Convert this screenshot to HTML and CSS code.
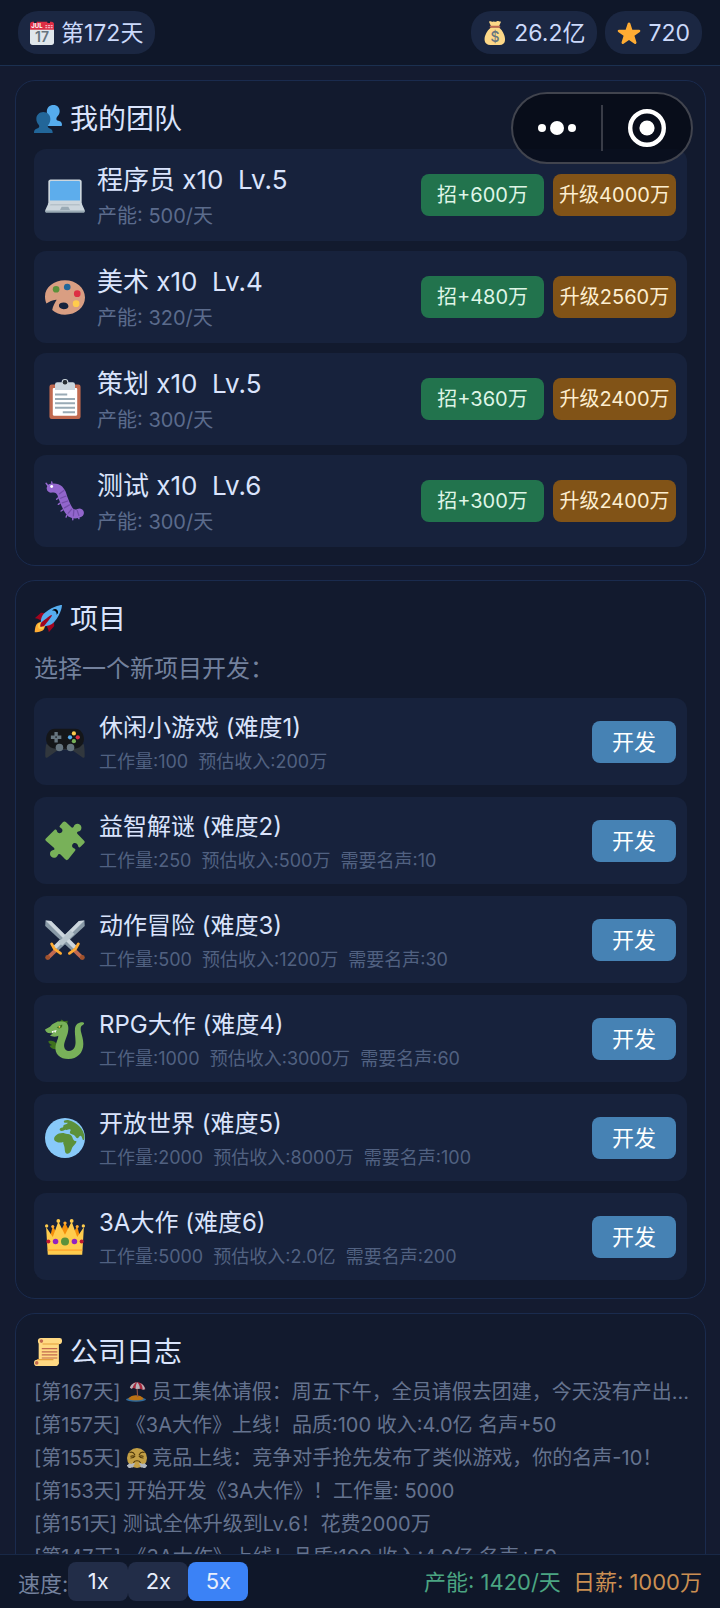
FILE: index.html
```
<!DOCTYPE html>
<html lang="zh-CN">
<head>
<meta charset="utf-8">
<meta name="viewport" content="width=device-width, initial-scale=1">
<title>我的团队</title>
<link rel="stylesheet" href="styles.css">
</head>
<body>
<div class="app">
  <header class="topbar">
    <div class="pill">
      <svg class="pill-icon" viewBox="0 0 36 36" aria-hidden="true"><path fill="#E0E7EC" d="M36 32a4 4 0 0 1-4 4H4a4 4 0 0 1-4-4V9h36z"/><path fill="#DD2E44" d="M4 1h28a4 4 0 0 1 4 4v8H0V5a4 4 0 0 1 4-4z"/><path fill="#14203a" d="M6 0h4v3H6zM26 0h4v3h-4z"/><path fill="#F4ABBA" d="M23 6h3v2h-3zM27 6h3v2h-3zM31 6h3v2h-3zM23 9h3v2h-3zM27 9h3v2h-3zM31 9h3v2h-3z"/><text x="2" y="11" class="cal-month">JUL</text><text x="18" y="32" text-anchor="middle" class="cal-day">17</text></svg>
      <span>第172天</span>
    </div>
    <div class="pill-group">
      <div class="pill">
        <svg class="pill-icon" viewBox="0 0 36 36" aria-hidden="true"><path fill="#FDD888" d="M31.9 21.5C30.500 16 26 11.500 23.500 9.500H12.500C10 11.500 5 16 3.500 21.500 1.500 26 1 36 11 36h14c10 0 8.500-10 6.900-14.500z"/><path fill="#FDD888" d="M12 8 9 1c3-2 4 1 6 0s4 1 6-.5 3 .5 6 .5l-3 7z"/><path fill="#BF6952" d="M11.500 7h13a1.500 1.500 0 0 1 0 3h-13a1.500 1.500 0 0 1 0-3z"/><text x="18" y="31" text-anchor="middle" class="bag-sign">$</text></svg>
        <span>26.2亿</span>
      </div>
      <div class="pill">
        <svg class="pill-icon" viewBox="0 0 36 36" aria-hidden="true"><path fill="#FFAC33" d="M27.287 34.627c-.404 0-.806-.124-1.152-.371L18 28.422l-8.135 5.834c-.343.247-.746.371-1.148.371-.403 0-.806-.123-1.151-.374-.688-.499-.977-1.387-.715-2.196l3.034-9.792-8.062-5.681c-.685-.506-.967-1.396-.704-2.205.264-.809 1.016-1.357 1.866-1.363l9.947-.014L16.150 3.445C16.421 2.640 17.174 2.100 18.023 2.100c.85 0 1.604.54 1.873 1.345l3.135 9.557 10.019.014c.849.006 1.602.554 1.865 1.363.263.809-.019 1.699-.704 2.205l-8.062 5.681 3.034 9.792c.262.809-.027 1.697-.715 2.196-.345.251-.748.374-1.181.374z"/></svg>
        <span>720</span>
      </div>
    </div>
  </header>

  <div class="capsule">
    <button class="capsule-btn" type="button" aria-label="更多"><svg class="dots" viewBox="0 0 40 16"><circle cx="5" cy="8" r="4"/><circle cx="20" cy="8" r="7"/><circle cx="35" cy="8" r="4"/></svg></button>
    <button class="capsule-btn" type="button" aria-label="关闭"><svg class="target" viewBox="0 0 38 38"><circle cx="19" cy="19" r="16.800" fill="none" stroke="#fff" stroke-width="4.400"/><circle cx="19" cy="19" r="7.600"/></svg></button>
  </div>

  <main class="content">
    <section class="card">
      <h2 class="card-title">
        <svg class="title-icon" viewBox="0 0 36 36" aria-hidden="true"><path fill="#55ACEE" d="M25 0c-5 0-8.500 3.500-8.500 8.500 0 3 .8 5.500 2.500 7.500 1 1.500 1 3.500-.5 4.500L14 23v4h21c1 0 1-1 1-1.500 0-4-3-5-6-5.500-1.500-.5-1.500-3-.5-4.500 2-2 3.500-4.500 3.500-7.500C33 3.500 30 0 25 0z"/><path fill="#226699" d="M12 9c-5 0-9 3.500-9 9 0 3 1.500 6 3 7.500 1.200 1.500 1 3.500-.5 4C2 30.500 0 32 0 35c0 1 0 1 1 1h22c1 0 1 0 1-1 0-3-2-4.500-5-5.500-1.500-.5-1.700-2.500-.5-4 1.500-1.500 2.500-4.500 2.500-7.500 0-5.500-4-9-9-9z"/></svg>
        我的团队
      </h2>
      <ul class="team-list">
        <li class="row">
          <svg class="row-icon" viewBox="0 0 36 36" aria-hidden="true"><path fill="#CCD6DD" d="M33 29.100c0 1-1 1.900-2 1.900H5c-1 0-2-.8-2-1.900V6c0-1.100.9-2 2-2h26c1.100 0 2 .9 2 2z"/><path fill="#9AAAB4" d="M36 32.400c0 .9-.7 1.600-1.600 1.600H1.600C.7 34 0 33.300 0 32.400s.7-1 1.600-1h32.800c.9 0 1.600.1 1.600 1z"/><path fill="#5DADEC" d="M5.500 5.500h25a1 1 0 0 1 1 1V23h-27V6.500a1 1 0 0 1 1-1z"/><path fill="#CCD6DD" d="m.1 32 3-6.500c.2-.4.500-.5 1-.5h27.800c.5 0 .8.100 1 .5l3 6.500z"/><path fill="#99AAB5" d="M13.500 31.500 15 28.500h6l1.500 3z"/><path fill="#B5C1C9" d="M5 26h26l.7 1.500H4.300z"/></svg>
          <div class="info"><div class="name">程序员 x10&nbsp; Lv.5</div><div class="meta">产能: 500/天</div></div>
          <div class="actions"><button class="btn btn-hire" type="button">招+600万</button><button class="btn btn-up" type="button">升级4000万</button></div>
        </li>
        <li class="row">
          <svg class="row-icon" viewBox="0 0 36 36" aria-hidden="true"><path fill="#D99E82" fill-rule="evenodd" d="M18 3C8 3 0 9.400 0 17.500 0 20 .5 22 1.300 23.800c2.500-1.300 6-3.600 9.200-3.300-1.500 2.500-3.500 6-4 9.200C9.500 32.500 13.500 34 18 34c10 0 18-6.900 18-15.500S28 3 18 3zm-1.200 26c-2.500 0-4.300-1.500-4.300-3.300s1.800-2.700 4.300-2.700 4.300 1.500 4.300 3.300S19.300 29 16.800 29z"/><circle cx="10" cy="11" r="3" fill="#5C913B"/><circle cx="20" cy="9" r="3" fill="#226699"/><circle cx="29" cy="15" r="3" fill="#DD2E44"/><circle cx="28" cy="24" r="3" fill="#FFCC4D"/></svg>
          <div class="info"><div class="name">美术 x10&nbsp; Lv.4</div><div class="meta">产能: 320/天</div></div>
          <div class="actions"><button class="btn btn-hire" type="button">招+480万</button><button class="btn btn-up" type="button">升级2560万</button></div>
        </li>
        <li class="row">
          <svg class="row-icon" viewBox="0 0 36 36" aria-hidden="true"><path fill="#C1694F" d="M32 34a2 2 0 0 1-2 2H6a2 2 0 0 1-2-2V7a2 2 0 0 1 2-2h24a2 2 0 0 1 2 2z"/><path fill="#FFF" d="M29 32a1 1 0 0 1-1 1H8a1 1 0 0 1-1-1V9a1 1 0 0 1 1-1h20a1 1 0 0 1 1 1z"/><path fill="#CCD6DD" fill-rule="evenodd" d="M25 3h-4a3 3 0 0 0-6 0h-4a2 2 0 0 0-2 2v5h18V5a2 2 0 0 0-2-2zm-7 1.800a1.800 1.800 0 1 1 0-3.600 1.800 1.800 0 0 1 0 3.600z"/><path fill="#292F33" d="M18 1a2 2 0 1 1 0 4 2 2 0 0 1 0-4z"/><path fill="#99AAB5" d="M9 13h11v1.800H9zM9 17h18v1.800H9zM9 21h18v1.800H9zM9 25h18v1.800H9zM16 29h11v1.800H16z"/></svg>
          <div class="info"><div class="name">策划 x10&nbsp; Lv.5</div><div class="meta">产能: 300/天</div></div>
          <div class="actions"><button class="btn btn-hire" type="button">招+360万</button><button class="btn btn-up" type="button">升级2400万</button></div>
        </li>
        <li class="row">
          <svg class="row-icon" viewBox="0 0 36 36" aria-hidden="true"><g fill="none" stroke-linecap="round" stroke-linejoin="round"><path stroke="#9266CC" stroke-width="1.300" d="M2.500 4 1 2M6.500 3.500 6 .8M12 15l-1.500 1.500M13.500 20l-1.500 1M16 26l-1.500 1M19.500 31l-.5 1.500M25 33v1.800M30 32l.5 1.800"/><path stroke="#9266CC" stroke-width="8" d="M5.500 6.500c6-1 9 2 10.500 8C18 20 20 26 23.500 28.700c2.500 1.500 5 1.300 7.500 0"/><path stroke="#744EAA" stroke-width="1.100" d="m13 11.500 4-3M14 15.500l5-2M15.500 19.700l5-1.700M17.500 24.200l4.500-2.700M21 29l3-3.700M25.500 31.500l.5-5.500M30.500 31l-1.500-4.500"/></g><circle cx="6" cy="5" r="1.300" fill="#fff"/></svg>
          <div class="info"><div class="name">测试 x10&nbsp; Lv.6</div><div class="meta">产能: 300/天</div></div>
          <div class="actions"><button class="btn btn-hire" type="button">招+300万</button><button class="btn btn-up" type="button">升级2400万</button></div>
        </li>
      </ul>
    </section>

    <section class="card">
      <h2 class="card-title">
        <svg class="title-icon" viewBox="0 0 36 36" aria-hidden="true"><path fill="#A0041E" d="M1 17l8-7 16 1 1 16-7 8s.001-5.999-6-12-12-6-12-6z"/><path fill="#FFAC33" d="M.973 35s-.036-7.979 2.985-11S15 21.187 15 21.187 14.999 29 11.999 32c-3 3-11.026 3-11.026 3z"/><circle fill="#FFCC4D" cx="9" cy="27" r="4"/><path fill="#55ACEE" d="M35.999 0s-10 0-22 10c-6 5-6 14-4 16s10 2 16-4c10-12 10-22 10-22z"/><path d="M26.999 5c-1.623 0-3.013.971-3.641 2.360.502-.227 1.055-.36 1.641-.36 2.209 0 4 1.791 4 4 0 .586-.133 1.139-.359 1.640 1.389-.627 2.359-2.017 2.359-3.640 0-2.209-1.791-4-4-4z"/><path fill="#A0041E" d="M8 28s0-4 1-5 13.001-10.999 14-10-9.001 13-10.001 14S8 28 8 28z"/></svg>
        项目
      </h2>
      <p class="hint">选择一个新项目开发：</p>
      <ul class="project-list">
        <li class="row project">
          <svg class="row-icon" viewBox="0 0 36 36" aria-hidden="true"><path fill="#31373D" d="M1 20C.3 24 .2 29 .3 31c.2 1.300 1 1.500 2.200.700L12 25h12l9.500 6.700c1.200.8 2 .6 2.200-.7.100-2 0-7-.7-11z"/><path fill="#141619" d="M9 6h18c5 0 8 4.500 8 9.500S31 24 26 24H10c-5 0-9-3.500-9-8.500S4 6 9 6z"/><path fill="#66757F" d="M8.500 9h3v3.200h3.200v3h-3.200v3.200h-3v-3.200H5.300v-3h3.200z"/><path fill="#31373D" d="M9.200 12.900h1.600v1.600H9.200z"/><circle cx="13" cy="23" r="3.400" fill="#66757F"/><circle cx="23" cy="23" r="3.400" fill="#66757F"/><circle cx="26" cy="10.300" r="1.900" fill="#FFCC4D"/><circle cx="22.500" cy="13.800" r="1.900" fill="#55ACEE"/><circle cx="29.500" cy="13.800" r="1.900" fill="#DD2E44"/><circle cx="26" cy="17.300" r="1.900" fill="#78B159"/></svg>
          <div class="info"><div class="name">休闲小游戏 (难度1)</div><div class="meta">工作量:100&nbsp; 预估收入:200万</div></div>
          <button class="btn btn-dev" type="button">开发</button>
        </li>
        <li class="row project">
          <svg class="row-icon" viewBox="0 0 36 36" aria-hidden="true"><path fill="#78B159" d="M1 15.500 8.500 8c1-1 2-.2 2.200.8.300 2.700 3.800 2.700 4.800.7.700-1.500-.2-2.800-1.500-3.500-1-.6-1.200-1.200-.5-2L16 1.200c1-1 2-1 3 0l4.500 4.300c1 1 2 .5 2.500-.7.700-3.300 6.500-3 6.800 1 .1 2.500-1.500 3.200-3 3.700-1.100.4-1.300 1.300-.5 2.200L35 17.500c1 1 1 1.700 0 2.700l-3 3c-1 1-2 .6-2.200-.6-.5-3-3.800-3.500-5-1.600-1.100 2 .2 3.200 1.700 3.800 1.100.5 1.200 1.400.4 2.200L21 34.500c-1 1-1.800 1-2.800 0L14 30.200c-1-1-2-.5-2.500.6-1.200 3.200-6.500 3.200-7-.8-.2-2.300 1.300-3.300 3-3.800 1.200-.3 1.300-1.200.5-2.200L1 18c-1-1-1-1.500 0-2.500z"/></svg>
          <div class="info"><div class="name">益智解谜 (难度2)</div><div class="meta">工作量:250&nbsp; 预估收入:500万&nbsp; 需要名声:10</div></div>
          <button class="btn btn-dev" type="button">开发</button>
        </li>
        <li class="row project">
          <svg class="row-icon" viewBox="0 0 36 36" aria-hidden="true"><path fill="#8899A6" d="m35.500.5.300 5L12 27.500 8.500 24 30.500.8z"/><path fill="#CCD6DD" d="M35.500.5 10 26l-2.500-2.500L30.500.8z"/><path fill="#C1694F" d="M1 33 9 25.500l2.500 2.500L3.500 35.500z"/><path fill="none" stroke="#FFAC33" stroke-width="2.600" stroke-linecap="round" d="m6 21.500 2.500 4.500 5.500 4"/><circle cx="2.400" cy="33.800" r="2.200" fill="#A0522D"/><g transform="matrix(-1 0 0 1 36 0)"><path fill="#8899A6" d="m35.500.5.300 5L12 27.500 8.500 24 30.500.8z"/><path fill="#CCD6DD" d="M35.500.5 10 26l-2.500-2.500L30.500.8z"/><path fill="#C1694F" d="M1 33 9 25.500l2.500 2.500L3.500 35.500z"/><path fill="none" stroke="#FFAC33" stroke-width="2.600" stroke-linecap="round" d="m6 21.500 2.500 4.500 5.500 4"/><circle cx="2.400" cy="33.800" r="2.200" fill="#A0522D"/></g><path fill="#B8C5CD" d="m23 9.500 3.500 3L15.500 23 12 20z"/></svg>
          <div class="info"><div class="name">动作冒险 (难度3)</div><div class="meta">工作量:500&nbsp; 预估收入:1200万&nbsp; 需要名声:30</div></div>
          <button class="btn btn-dev" type="button">开发</button>
        </li>
        <li class="row project">
          <svg class="row-icon" viewBox="0 0 36 36" aria-hidden="true"><path fill="#3E721D" d="m10 4 1.500-2.500L13 3l2-2.500L17 2l3.500-.5L20 5z"/><path fill="#3E721D" d="M3 20c3-1 6 0 7 2l1 5c-3 1-6-1-7-3l2.500-.5c-2-.8-3.500-2-3.500-3.500z"/><path fill="#78B159" d="M0 9.500 4.500 7C7 3.500 12 1.500 17 2.500c4 .8 4.800 5 3.500 10-1.300 4.800-3.500 8.500-3.300 12 .2 2.800 2 4.300 4.300 4.300 4 0 6-3.300 6-7.800 0-5-1-9-.5-12.500C27.600 5 30 3 33.500 3c2 0 2.200 1.800.5 2.300-2 .7-2.200 3.200-1.500 6.700.8 3.500 2 6.500 2 10.500 0 8-5.500 13.500-13.500 13.500C13.500 36 8.500 31.500 9.500 24.500c.5-4 2.500-6.500 2.500-9.500-2.500 1.500-5.500 1.300-7.500-.3L7.500 13 3 12.500c-1.500 0-2.500-1.500-3-3z"/><path fill="#FFF" d="m6 11 1 2 1-2.300 1.200 1.800 1.300-2.500z"/><path fill="#3E721D" d="m10.500 7.500 5-2.500c.5 2.500-2 5-5 2.500z"/><circle cx="13" cy="7" r=".8" fill="#FFCC4D"/></svg>
          <div class="info"><div class="name">RPG大作 (难度4)</div><div class="meta">工作量:1000&nbsp; 预估收入:3000万&nbsp; 需要名声:60</div></div>
          <button class="btn btn-dev" type="button">开发</button>
        </li>
        <li class="row project">
          <svg class="row-icon" viewBox="0 0 36 36" aria-hidden="true"><circle cx="18" cy="18" r="18" fill="#88C9F9"/><path fill="#5C913B" d="M17 3.500c-.5-1.200 2-2 4.500-1.500C29 4 35 10 35.500 17c.2 2-.8 3.500-1.500 2.500-.7-1.500-1-3.500-2.200-3.500-1.300 0-1.300 2.500-2.600 2.200-1.700-.4-2-2.700-3.700-3.200-1-.3-2.500-.5-3-1.500-.7-1.200 1-2 .5-3-.8-1-2.700.7-4 .2-1.500-.6-2.500 1.200-4 1-1.200-.2-2.500-1-1.500-2.200.8-1 3-.5 3-2 0-2 3-1.500 4-3 .3-.5-3 .5-3.500-1zM10 15.500c2-1.500 5-2.500 8-1.500 2.500.8 5 0 6.500 3 .7 1.700 1.500 4 3 3.700 1.200-.2 1 1 0 2.300-1.500 2-3 3-3.500 5-.5 2.500-2 4.500-4 4.200-2.500-.4-2-3.700-2.500-6.200-.3-2-1.500-3-1-4.500-2 .7-5 1-7-.5C7.500 19.500 8 17 10 15.500z"/></svg>
          <div class="info"><div class="name">开放世界 (难度5)</div><div class="meta">工作量:2000&nbsp; 预估收入:8000万&nbsp; 需要名声:100</div></div>
          <button class="btn btn-dev" type="button">开发</button>
        </li>
        <li class="row project">
          <svg class="row-icon" viewBox="0 0 36 36" aria-hidden="true"><path fill="#F4900C" d="M4 20 7 8l5 9 6-12 6 12 5-9 3 12v4H4z"/><path fill="#FFCC4D" d="M2.500 34 1 9l6 9 5-14 6 12 6-12 5 14 6-9-1.500 25z"/><path fill="#FFAC33" d="M2.500 29h31v1.500h-31z"/><g fill="#FFCC4D"><circle cx="1.500" cy="8" r="1.500"/><circle cx="12" cy="3.500" r="1.700"/><circle cx="24" cy="3.500" r="1.700"/><circle cx="34.500" cy="8" r="1.500"/></g><g fill="#FFAC33"><circle cx="7" cy="8.500" r="1.400"/><circle cx="18" cy="5.500" r="1.500"/><circle cx="29" cy="8.500" r="1.400"/></g><circle cx="18" cy="22" r="3.600" fill="#5C913B"/><circle cx="9.500" cy="22" r="2.500" fill="#9322BF"/><circle cx="26.500" cy="22" r="2.500" fill="#9322BF"/><circle cx="3" cy="22" r="1.800" fill="#BE1931"/><circle cx="33" cy="22" r="1.800" fill="#BE1931"/></svg>
          <div class="info"><div class="name">3A大作 (难度6)</div><div class="meta">工作量:5000&nbsp; 预估收入:2.0亿&nbsp; 需要名声:200</div></div>
          <button class="btn btn-dev" type="button">开发</button>
        </li>
      </ul>
    </section>

    <section class="card">
      <h2 class="card-title">
        <svg class="title-icon" viewBox="0 0 36 36" aria-hidden="true"><path fill="#FFD983" d="M6 3h26v30H6z"/><path fill="#FFD983" d="M32 8H9a4 4 0 0 1 0-8h24a3 3 0 0 1 3 3v1.500C36 6.500 34.500 8 32 8zM4 28h24v4l4-1c0 3-1 5-3 5H4a4 4 0 0 1 0-8z"/><path fill="#E39F3D" d="M11 7h21v1.500H11zM4 27h21v1.500H4z"/><circle cx="9.500" cy="4" r="2.300" fill="#C1694F"/><circle cx="3.500" cy="32" r="2.300" fill="#C1694F"/><path fill="#C1694F" d="M10 13h20v1.500H10zM10 17h20v1.500H10zM10 21h20v1.500H10zM10 25h20v1.500H10z"/></svg>
        公司日志
      </h2>
      <ul class="log">
        <li>[第167天] <svg class="log-icon" viewBox="0 0 36 36" aria-hidden="true"><ellipse cx="18" cy="31.500" rx="18" ry="4" fill="#3B88C3"/><path fill="#F4900C" d="M4 30.500C7 26 13 24 18 24s11 2 14 6.500c-4 3-24 3-28 0z"/><path stroke="#BE6952" stroke-width="2" d="m20 12 1 15"/><path fill="#DD2E44" d="M7 10C9 4 14 .5 20 .5S33 5 35 13l-5 1-5-2-5 1-6-2-4 1z"/><path fill="#E6E7E8" d="M12 10.500C13 6 16 2 20 .5c-5 .5-9 3-11 6l-2 4 3 1.500zM20 .5c-2 4-3 8-2.500 12l7.500-.5C25 7 23 3 20 .5zM25 2c4 3 5 7 5 12l4-1c0-5-4-9-9-11z"/></svg> 员工集体请假：周五下午，全员请假去团建，今天没有产出...</li>
        <li>[第157天] 《3A大作》上线！品质:100 收入:4.0亿 名声+50</li>
        <li>[第155天] <svg class="log-icon" viewBox="0 0 36 36" aria-hidden="true"><circle cx="18" cy="18" r="18" fill="#FFCC4D"/><g fill="none" stroke="#664500" stroke-width="2" stroke-linecap="round"><path d="M5 8c3-1 7 0 9 4M31 8c-3-1-7 0-9 4M7 18c3 0 6-1 7-3-2-1-5-1-7 0M29 18c-3 0-6-1-7-3 2-1 5-1 7 0M12 26c2-4 10-4 12 0"/></g><path fill="#E6ECF0" d="M14 27c0 3-1 3-2 4 0 3-1 5-4 4-2 2-6 1-6-1-3-1-3-4 0-4 1-3 5-2 6-1 2-1 4-2 6-2zM22 27c0 3 1 3 2 4 0 3 1 5 4 4 2 2 6 1 6-1 3-1 3-4 0-4-1-3-5-2-6-1-2-1-4-2-6-2z"/></svg> 竞品上线：竞争对手抢先发布了类似游戏，你的名声-10！</li>
        <li>[第153天] 开始开发《3A大作》！工作量: 5000</li>
        <li>[第151天] 测试全体升级到Lv.6！花费2000万</li>
        <li>[第147天] 《3A大作》上线！品质:100 收入:4.0亿 名声+50</li>
      </ul>
    </section>
  </main>

  <footer class="bottombar">
    <div class="speed">
      <span>速度:</span>
      <button class="speed-btn" type="button">1x</button>
      <button class="speed-btn" type="button">2x</button>
      <button class="speed-btn active" type="button">5x</button>
    </div>
    <div class="stats"><span class="output">产能: 1420/天</span><span class="salary">日薪: 1000万</span></div>
  </footer>
</div>
</body>
</html>
```
FILE: styles.css
```
* {
  box-sizing: border-box;
}

body {
  margin: 0;
  background: #141b30;
  color: #dae4fc;
  font-family: Inter, "Noto Sans CJK SC", sans-serif;
}

h2, p, ul {
  margin: 0;
  padding: 0;
  font-weight: 400;
  list-style: none;
}

button {
  padding: 0;
  border: 0;
  font: inherit;
  color: inherit;
  cursor: pointer;
}

svg {
  display: block;
  flex: none;
}

.app {
  position: relative;
  display: flex;
  flex-direction: column;
  height: 100vh;
}

.topbar {
  display: flex;
  justify-content: space-between;
  padding: 11px 18px;
  background: #0f1729;
  border-bottom: 1px solid #1b3050;
}

.pill-group {
  display: flex;
  gap: 8px;
}

.pill {
  display: flex;
  align-items: center;
  gap: 7px;
  padding: 1px 12px 0;
  border-radius: 20px;
  background: #1b2742;
  color: #cbd9fa;
  font-size: 23px;
  line-height: 42px;
}

.pill-icon {
  width: 24px;
  height: 24px;
}

.cal-month {
  font-size: 9px;
  font-weight: 700;
  fill: #fff;
}

.cal-day {
  font-size: 21px;
  font-weight: 600;
  fill: #66757f;
}

.bag-sign {
  font-size: 21px;
  font-weight: 500;
  fill: #67757f;
}

.capsule {
  position: absolute;
  top: 92px;
  right: 27px;
  display: flex;
  width: 182px;
  height: 72px;
  padding: 11px 0;
  border: 2px solid #41444e;
  border-radius: 36px;
  background: rgba(6, 10, 20, 0.75);
}

.capsule-btn {
  display: flex;
  flex: 1;
  align-items: center;
  justify-content: center;
  background: none;
  fill: #fff;
}

.capsule-btn + .capsule-btn {
  border-left: 2px solid #393c47;
}

.dots {
  width: 40px;
  height: 16px;
}

.target {
  width: 38px;
  height: 38px;
}

.content {
  display: flex;
  flex: 1;
  flex-direction: column;
  gap: 14px;
  min-height: 0;
  padding: 14px 14px 0 15px;
  overflow-y: auto;
  scrollbar-width: none;
}

.card {
  flex: none;
  padding: 18px;
  border: 1px solid #1a2b4e;
  border-radius: 20px;
  background: #121a2e;
}

.card-title {
  display: flex;
  align-items: center;
  gap: 8px;
  font-size: 28px;
  line-height: 40px;
}

.title-icon {
  width: 28px;
  height: 28px;
}

.team-list,
.project-list {
  display: flex;
  flex-direction: column;
}

.team-list {
  gap: 10px;
  margin-top: 10px;
}

.project-list {
  gap: 12px;
  margin-top: 9px;
}

.row {
  display: flex;
  align-items: center;
  gap: 12px;
  padding: 0 11px;
  border-radius: 12px;
  background: #17223c;
}

.row-icon {
  width: 40px;
  height: 40px;
}

.info {
  flex: 1;
  min-width: 0;
  padding: 12px 0 8px;
}

.name {
  font-size: 26px;
  line-height: 38px;
}

.meta {
  color: #5b6b8c;
  font-size: 20px;
  line-height: 34px;
}

.project {
  gap: 14px;
}

.project .name {
  font-size: 24px;
  line-height: 36px;
}

.project .meta {
  color: #516181;
  font-size: 18px;
  line-height: 31px;
}

.actions {
  display: flex;
  gap: 9px;
}

.btn {
  height: 42px;
  padding-bottom: 3px;
  border-radius: 8px;
  white-space: nowrap;
}

.btn-hire,
.btn-up {
  width: 123px;
  font-size: 20px;
}

.btn-hire {
  background: #22734d;
  color: #def5e6;
}

.btn-up {
  background: #815317;
  color: #fdeecf;
}

.btn-dev {
  width: 84px;
  background: #4682b4;
  color: #fff;
  font-size: 22px;
}

.hint {
  margin-top: 10px;
  color: #73819d;
  font-size: 24px;
  line-height: 40px;
}

.log {
  margin-right: -10px;
  padding-top: 4px;
  color: #65738f;
  font-size: 20px;
  line-height: 33px;
}

.log li {
  overflow: hidden;
  text-overflow: ellipsis;
  white-space: nowrap;
}

.log-icon {
  display: inline-block;
  width: 20px;
  height: 20px;
  vertical-align: -3px;
  opacity: 0.75;
}

.bottombar {
  display: flex;
  align-items: center;
  justify-content: space-between;
  padding: 7px 18px;
  background: #0f1729;
  border-top: 1px solid #182846;
  font-size: 22px;
}

.speed {
  display: flex;
  align-items: center;
  color: #73819d;
}

.speed-btn {
  width: 60px;
  height: 39px;
  padding-bottom: 2px;
  border-radius: 8px;
  background: #222d48;
  color: #e6eefc;
}

.speed-btn.active {
  background: #3b82f6;
}

.stats {
  display: flex;
  gap: 12px;
  padding-bottom: 3px;
}

.output {
  color: #4ba582;
}

.salary {
  color: #ca8f52;
}
```
